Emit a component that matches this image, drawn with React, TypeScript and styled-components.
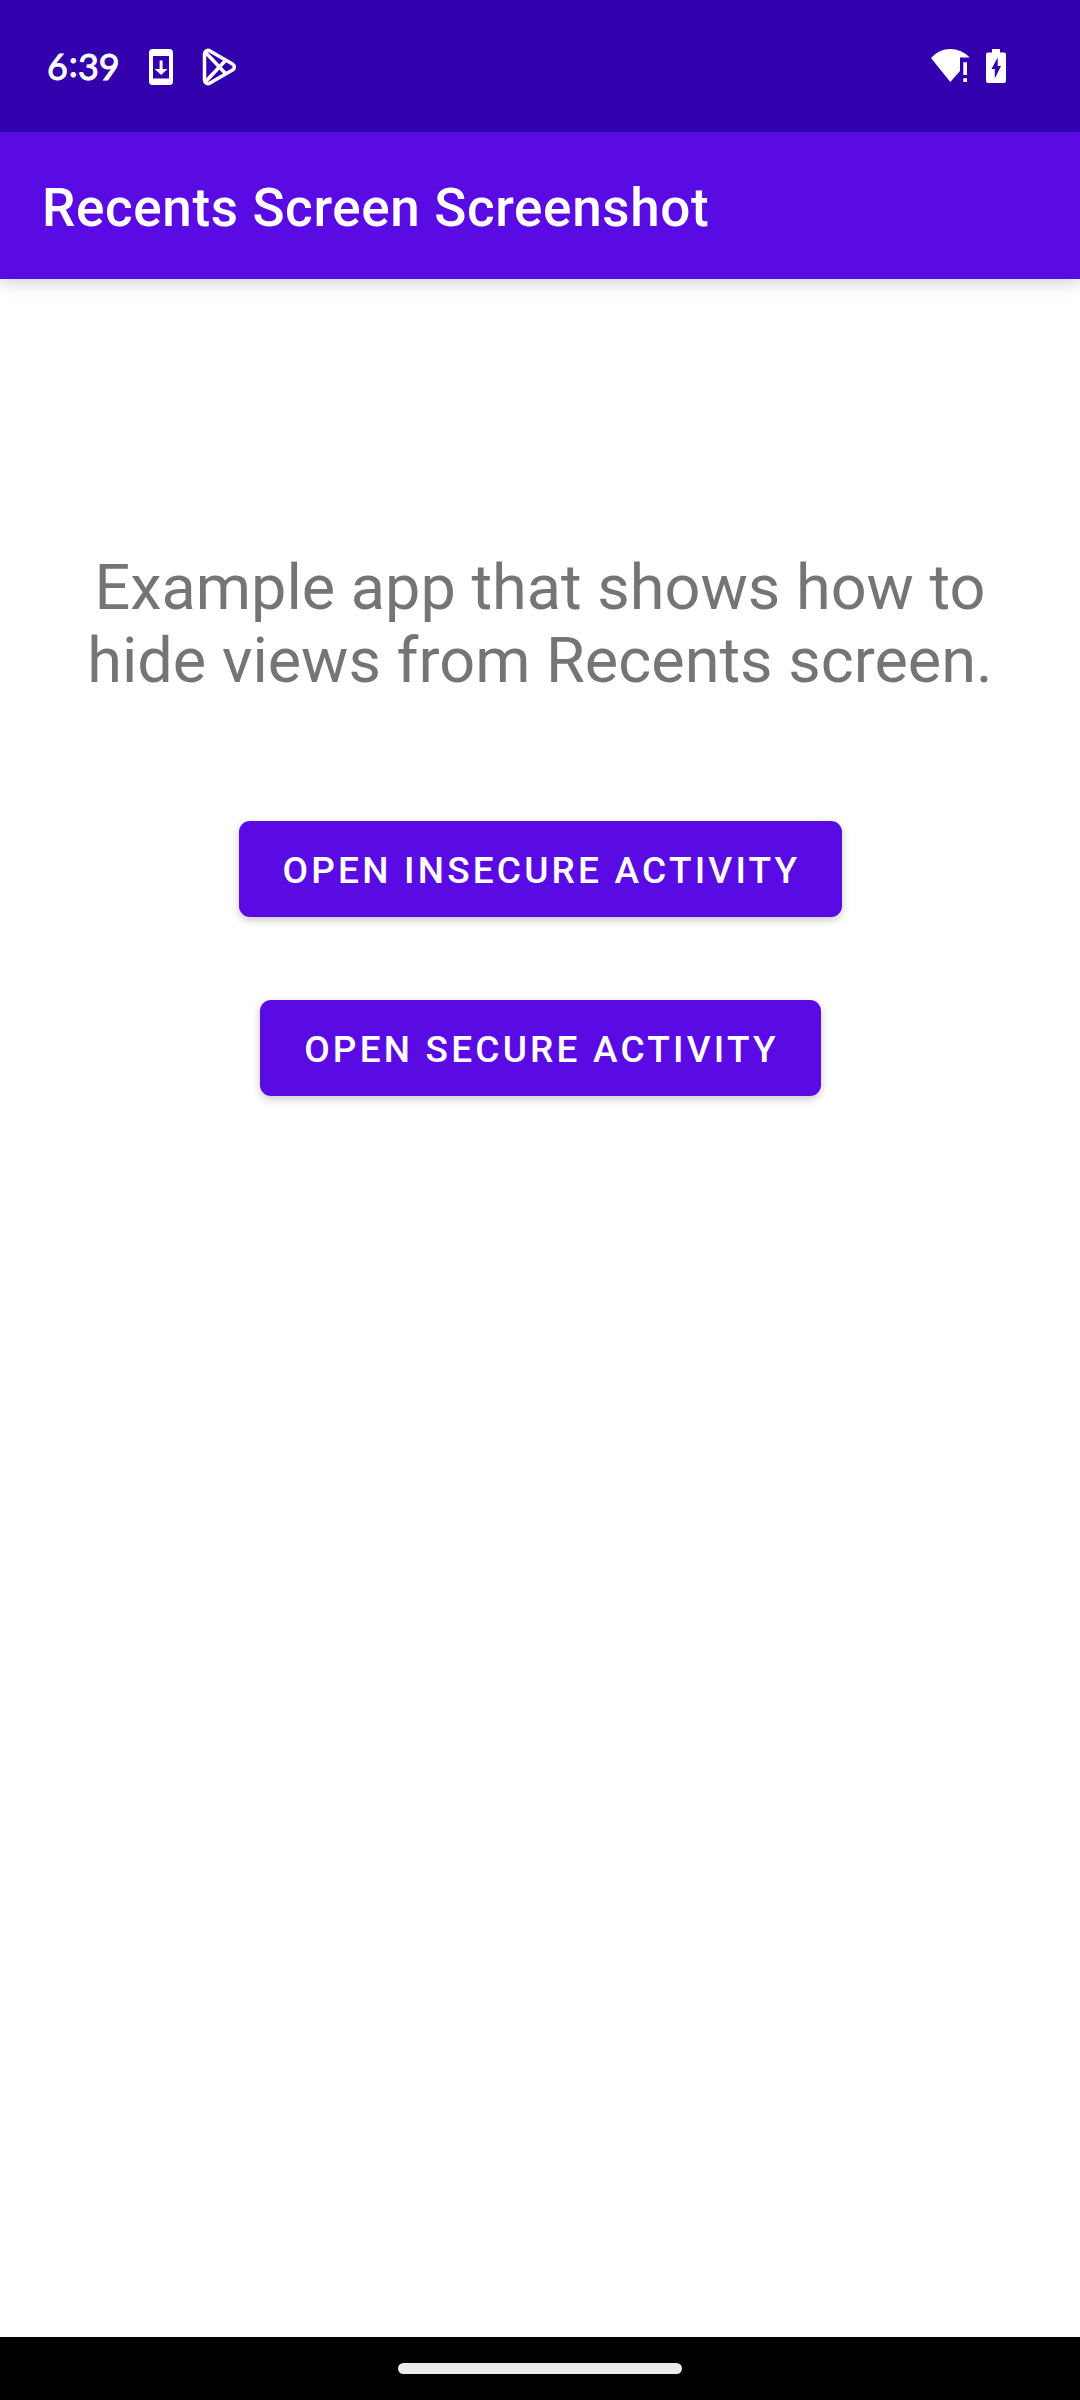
import React from "react";
import styled, { createGlobalStyle } from "styled-components";

const GlobalStyle = createGlobalStyle`
  * { box-sizing: border-box; }
  body { margin: 0; background: #fff; }
`;

const Screen = styled.div`
  width: 1080px;
  height: 2400px;
  display: flex;
  flex-direction: column;
  overflow: hidden;
  background: #fff;
  font-family: Roboto, "Noto Sans", sans-serif;
`;

const StatusBar = styled.header`
  flex: none;
  z-index: 1;
  height: 132px;
  padding: 2px 74px 0 47px;
  display: flex;
  align-items: center;
  justify-content: space-between;
  background: #3200ad;
  color: #fff;
`;

const StatusGroup = styled.div<{ $gap: number }>`
  display: flex;
  align-items: center;
  gap: ${(p) => p.$gap}px;
  height: 44px;
`;

const Clock = styled.time`
  display: flex;
  width: 73px;
  height: 46px;
  margin-right: 1px;
  font: 400 36px/44px Lato, "Open Sans", sans-serif;
  letter-spacing: -0.2px;
  white-space: nowrap;
  -webkit-text-stroke: 0.9px #fff;
`;

const Colon = styled.span`
  margin: -3px 0.5px 0 1px;
`;

const Glyph = styled.svg`
  display: block;
  flex: none;
`;

const AppBar = styled.div`
  flex: none;
  height: 147px;
  padding: 4px 42px 0;
  display: flex;
  align-items: center;
  background: #5a0be3;
  box-shadow: 0 4px 16px rgba(0, 0, 0, 0.18);
`;

const Title = styled.h1`
  margin: 0;
  color: #fff;
  font-size: 53px;
  font-weight: 500;
  line-height: 62px;
  letter-spacing: 0.0118em;
  white-space: nowrap;
`;

const Content = styled.main`
  flex: 1;
  display: flex;
  flex-direction: column;
  align-items: center;
  padding-top: 272px;
`;

const Description = styled.p`
  margin: 0 0 124px;
  color: #757575;
  font-size: 63px;
  line-height: 73px;
  text-align: center;
`;

const ActionButton = styled.button<{ $width: number }>`
  width: ${(p) => p.$width}px;
  height: 96px;
  margin-bottom: 83px;
  padding: 2px 0 0 3px;
  border: 0;
  border-radius: 11px;
  background: #5a0be3;
  color: #fff;
  font-family: inherit;
  font-size: 37px;
  font-weight: 500;
  line-height: 43px;
  letter-spacing: 0.0865em;
  text-transform: uppercase;
  white-space: nowrap;
  box-shadow: 0 3px 9px rgba(0, 0, 0, 0.22);
`;

const NavigationBar = styled.footer`
  flex: none;
  height: 63px;
  display: flex;
  align-items: center;
  justify-content: center;
  background: #000;
`;

const HomeHandle = styled.div`
  width: 284px;
  height: 11px;
  border-radius: 6px;
  background: #ebebeb;
`;

const SystemUpdateIcon = () => (
  <Glyph width="24" height="36" viewBox="149 49 24 36">
    <path
      fill="#fff"
      fillRule="evenodd"
      d="M152.500 49h17a3.500 3.500 0 0 1 3.500 3.500v29a3.500 3.500 0 0 1-3.500 3.500h-17a3.500 3.500 0 0 1-3.500-3.500v-29a3.500 3.500 0 0 1 3.500-3.500ZM153 56v22.500h16V56ZM159.600 60.500h3v8.500h4.900l-6.400 6-6.400-6h4.900Z"
    />
  </Glyph>
);

const PlayIcon = () => (
  <Glyph width="36" height="38" viewBox="201 48 36 38">
    <g fill="none" stroke="#fff" strokeWidth="3.500" strokeLinejoin="round">
      <path d="M204.500 54c0-3 3-4.500 5.500-3l22.500 13c2.500 1.500 2.500 4.500 0 6L210 83c-2.500 1.500-5.500 0-5.500-3Z" />
      <path d="M205.200 52l20.300 21.500M205.200 82l20.300-21.500" />
    </g>
  </Glyph>
);

const WifiAlertIcon = () => (
  <Glyph width="40" height="36" viewBox="931 49 40 36">
    <path fill="#fff" d="M931 58Q939 49 950.300 49T969.700 57.500H960V71L950.300 82Z" />
    <path fill="#fff" d="M963.300 62.300h3.700V75h-3.700zM963.300 78.300h3.700V82h-3.700z" />
  </Glyph>
);

const BatteryIcon = () => (
  <Glyph width="20" height="36" viewBox="986 49 20 36">
    <path
      fill="#fff"
      fillRule="evenodd"
      d="M992 49h8v3.500h4a2 2 0 0 1 2 2V81a2 2 0 0 1-2 2h-16a2 2 0 0 1-2-2V54.500a2 2 0 0 1 2-2h4ZM997.700 57.500L991.500 69h3.300v9.500L1001 66h-3.300Z"
    />
  </Glyph>
);

export default function App() {
  return (
    <>
      <GlobalStyle />
      <Screen>
        <StatusBar>
          <StatusGroup $gap={28}>
            <Clock>
              6<Colon>:</Colon>39
            </Clock>
            <SystemUpdateIcon />
            <PlayIcon />
          </StatusGroup>
          <StatusGroup $gap={15}>
            <WifiAlertIcon />
            <BatteryIcon />
          </StatusGroup>
        </StatusBar>
        <AppBar>
          <Title>Recents Screen Screenshot</Title>
        </AppBar>
        <Content>
          <Description>
            Example app that shows how to
            <br />
            hide views from Recents screen.
          </Description>
          <ActionButton $width={603}>Open insecure activity</ActionButton>
          <ActionButton $width={561}>Open secure activity</ActionButton>
        </Content>
        <NavigationBar>
          <HomeHandle />
        </NavigationBar>
      </Screen>
    </>
  );
}
